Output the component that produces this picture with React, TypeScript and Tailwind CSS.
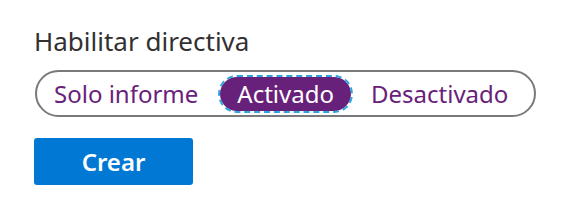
export default function App() {
  return (
    <div className="flex h-[205px] w-[561px] flex-col bg-white pl-[34px] pt-[25px] font-['Noto_Sans',sans-serif]">
      <label className="text-[26px] leading-[33px] text-[#323130]">
        Habilitar directiva
      </label>
      <div className="mt-[12px] ml-[1px] flex h-[47px] w-[501px] items-center rounded-full border-2 border-[#7a7a7a] pl-[17px]">
        <span className="text-[24px] leading-none text-[#68217a]">
          Solo informe
        </span>
        <button
          type="button"
          className="ml-[22px] flex h-[34px] items-center rounded-full bg-[#68217a] px-[17px] text-[24px] leading-none text-white outline-2 outline-dashed outline-[#2ea3dc]"
        >
          Activado
        </button>
        <span className="ml-[20px] text-[24px] leading-none text-[#68217a]">
          Desactivado
        </span>
      </div>
      <button
        type="button"
        className="mt-[21px] h-[47px] w-[159px] rounded-[3px] bg-[#0078d4] text-[24px] font-semibold text-white"
      >
        Crear
      </button>
    </div>
  );
}
